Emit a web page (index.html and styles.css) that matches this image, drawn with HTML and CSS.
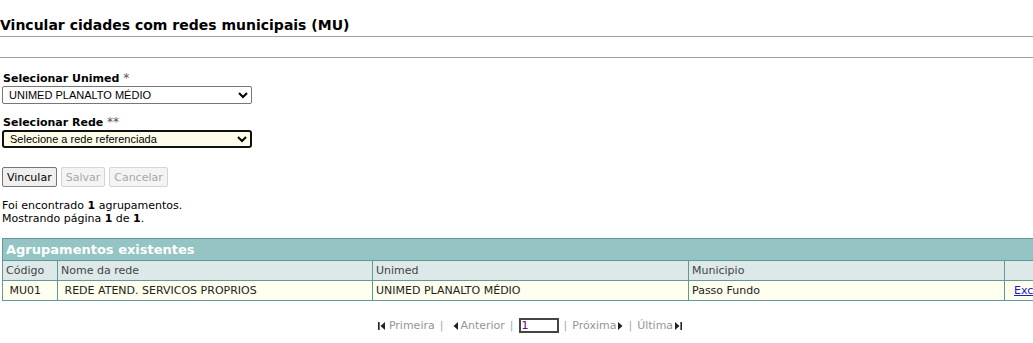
FILE: index.html
```html
<!DOCTYPE html>
<html>
    <head>
        <title>Vincular cidades com redes municipais (MU)</title>
        <link rel="stylesheet" href="styles.css">
    </head>
    <body>
        <h1 class="titulo">Vincular cidades com redes municipais (MU)</h1>
        <hr class="linha">
        <hr class="linha linha2">

        <form class="formulario">
            <label class="rotulo" for="unimed">Selecionar Unimed <span class="obrig">*</span></label>
            <select id="unimed" class="campo">
                <option>UNIMED PLANALTO MÉDIO</option>
            </select>

            <label class="rotulo" for="rede">Selecionar Rede <span class="obrig">**</span></label>
            <select id="rede" class="campo campo-foco">
                <option>Selecione a rede referenciada</option>
            </select>

            <div class="botoes">
                <button type="button" class="botao">Vincular</button>
                <button type="button" class="botao" disabled>Salvar</button>
                <button type="button" class="botao" disabled>Cancelar</button>
            </div>
        </form>

        <p class="resumo">
            Foi encontrado <b>1</b> agrupamentos.<br>
            Mostrando página <b>1</b> de <b>1</b>.
        </p>

        <table class="grade">
            <tr>
                <th colspan="5" class="grade-titulo">Agrupamentos existentes</th>
            </tr>
            <tr class="grade-cab">
                <td class="c-cod">Código</td>
                <td class="c-nome">Nome da rede</td>
                <td class="c-unimed">Unimed</td>
                <td class="c-mun">Municipio</td>
                <td class="c-acao"></td>
            </tr>
            <tr class="grade-linha">
                <td class="c-cod">&nbsp;MU01</td>
                <td class="c-nome">&nbsp;REDE ATEND. SERVICOS PROPRIOS</td>
                <td class="c-unimed">UNIMED PLANALTO MÉDIO</td>
                <td class="c-mun">Passo Fundo</td>
                <td class="c-acao"><a href="#">Excluir</a></td>
            </tr>
        </table>

        <div class="paginacao">
            <span class="pag-link primeira">
                <svg class="seta" width="7" height="8" viewBox="0 0 7 8"><rect x="0" y="0" width="1.6" height="8" fill="#222"/><polygon points="7,0 7,8 2.5,4" fill="#222"/></svg>Primeira
            </span>
            <span class="sep">|</span>
            <span class="pag-link anterior">
                <svg class="seta" width="5" height="8" viewBox="0 0 5 8"><polygon points="5,0 5,8 0.5,4" fill="#222"/></svg>Anterior
            </span>
            <span class="sep">|</span>
            <input type="text" class="pag-num" value="1">
            <span class="sep">|</span>
            <span class="pag-link">
                Próxima<svg class="seta" width="5" height="8" viewBox="0 0 5 8"><polygon points="0,0 0,8 4.5,4" fill="#222"/></svg>
            </span>
            <span class="sep">|</span>
            <span class="pag-link">
                Última<svg class="seta" width="7" height="8" viewBox="0 0 7 8"><polygon points="0,0 0,8 4.5,4" fill="#222"/><rect x="5.4" y="0" width="1.6" height="8" fill="#222"/></svg>
            </span>
        </div>
    </body>
</html>
```

FILE: styles.css
```css
body {
    font-family: "DejaVu Sans", Verdana, sans-serif;
    font-size: 11px;
    color: #000;
    background: #fff;
    margin: 0;
    width: 1060px;
}
.titulo {
    font-size: 14px;
    font-weight: bold;
    margin: 0;
    padding: 17px 0 0 0;
    height: 19px;
}
.linha {
    border: 0;
    border-top: 1px solid #a0a0a0;
    margin: 0;
    width: 1033px;
}
.linha2 {
    margin-top: 20px;
}
.formulario {
    padding: 12px 0 0 2px;
}
.rotulo {
    display: block;
    font-weight: bold;
    font-size: 11px;
    padding-left: 1px;
    height: 16px;
    line-height: 16px;
}
.obrig {
    color: #555;
    font-weight: normal;
    font-size: 12px;
}
.campo {
    display: block;
    width: 250px;
    height: 18px;
    font-family: "Liberation Sans", Arial, sans-serif;
    font-size: 11px;
    border: 1px solid #767676;
    border-radius: 2px;
    background: #fff;
    padding: 0 0 0 2px;
    margin-bottom: 10px;
}
.campo-foco {
    border: 2px solid #101010;
    border-radius: 3px;
    background: #fffde9;
    margin-bottom: 0;
}
.botoes {
    display: flex;
    gap: 4px;
    margin-top: 19px;
}
.botao {
    font-family: "DejaVu Sans", Verdana, sans-serif;
    font-size: 11px;
    height: 20px;
    padding: 0 4px;
    border: 1px solid #767676;
    border-radius: 2px;
    background: #efefef;
    color: #000;
}
.botao:disabled {
    border-color: #d4d4d4;
    background: #f4f4f4;
    color: #a8a8a8;
}
.resumo {
    margin: 12px 0 0 2px;
    line-height: 13px;
}
.grade {
    margin: 13px 0 0 2px;
    border-collapse: collapse;
    width: 1060px;
    border: 1px solid #5f9a9a;
}
.grade td, .grade th {
    border: 1px solid #5f9a9a;
    padding: 0 3px;
    text-align: left;
}
.grade-titulo {
    background: #94c4c4;
    color: #fff;
    font-size: 13px;
    font-weight: bold;
    height: 21px;
}
.grade-cab td {
    background: #dde9e9;
    color: #444;
    height: 19px;
}
.grade-linha td {
    background: #ffffef;
    color: #222;
    height: 19px;
}
.c-cod { width: 48px; }
.c-nome { width: 308px; }
.c-unimed { width: 309px; }
.c-mun { width: 309px; }
.c-acao a {
    color: #2020c0;
    padding-left: 6px;
}
.paginacao {
    display: flex;
    justify-content: center;
    align-items: center;
    gap: 5px;
    width: 1060px;
    margin-top: 17px;
    font-size: 11px;
}
.pag-link {
    display: flex;
    align-items: center;
    gap: 2px;
    color: #959595;
}
.primeira {
    gap: 4px;
}
.anterior {
    margin-left: 5px;
}
.sep {
    color: #aaa;
}
.seta {
    display: block;
}
.pag-num {
    width: 34px;
    height: 11px;
    font-size: 11px;
    border: 2px solid #444;
    padding: 0 1px;
    color: #6a0a6a;
    font-family: "DejaVu Sans", Verdana, sans-serif;
}
```
